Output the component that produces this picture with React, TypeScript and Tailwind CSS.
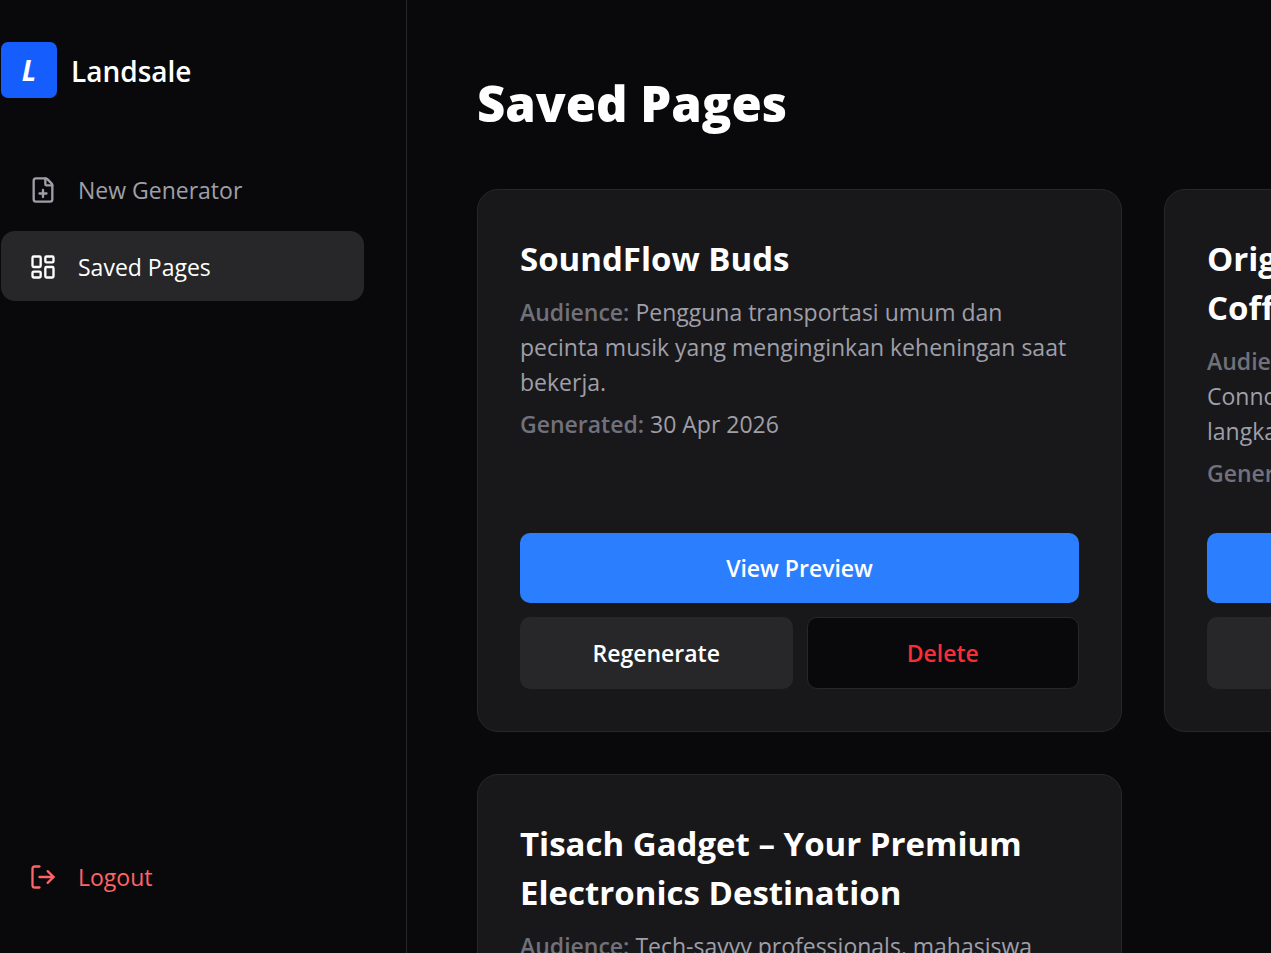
import { FilePlus, LayoutDashboard, LogOut } from "lucide-react";

type Page = {
  title: string;
  audience: string;
  generated: string;
};

const pages: Page[] = [
  {
    title: "SoundFlow Buds",
    audience:
      "Pengguna transportasi umum dan pecinta musik yang menginginkan keheningan saat bekerja.",
    generated: "30 Apr 2026",
  },
  {
    title: "Origin Reserve Premium\nCoffee",
    audience: "Pecinta kopi,\nConnoisseur dan kolektor biji kopi\nlangka.",
    generated: "30 Apr 2026",
  },
  {
    title: "Tisach Gadget – Your Premium Electronics Destination",
    audience: "Tech-savvy professionals, mahasiswa",
    generated: "30 Apr 2026",
  },
];

function Sidebar() {
  const item =
    "flex h-[70px] w-full items-center gap-[21px] rounded-[14px] px-7 pt-0.5 text-left text-[23px]";
  return (
    <aside className="flex w-[407px] shrink-0 flex-col border-r border-[#27272a] py-[42px] pr-[42px] pl-px">
      <div className="mb-14 flex items-center gap-3.5">
        <div className="flex size-14 items-center justify-center rounded-[7px] bg-[#155dfc] text-[28px] font-bold italic">
          L
        </div>
        <span className="pt-0.5 text-[28px] font-semibold">Landsale</span>
      </div>
      <nav className="flex flex-col gap-[7px]">
        <a href="#new" className={`${item} text-[#9f9fa9]`}>
          <FilePlus size={28} />
          New Generator
        </a>
        <a href="#saved" aria-current="page" className={`${item} bg-[#27272a] text-white`}>
          <LayoutDashboard size={28} />
          Saved Pages
        </a>
      </nav>
      <button type="button" className={`${item} mt-auto text-[#ff6467]`}>
        <LogOut size={28} />
        Logout
      </button>
    </aside>
  );
}

function PageCard({ title, audience, generated }: Page) {
  return (
    <article className="flex flex-col rounded-[21px] border border-[#27272a] bg-[#18181b] p-[42px]">
      <div className="mb-[42px] flex-1 whitespace-pre-line">
        <h2 className="pt-0.5 pb-3 text-[33px] leading-[49px] font-bold">{title}</h2>
        <p className="mb-[7px] text-[23px] leading-[35px] text-[#9f9fa9]">
          <span className="font-semibold text-[#71717b]">Audience:</span> {audience}
        </p>
        <p className="text-[23px] leading-[35px] text-[#9f9fa9]">
          <span className="font-semibold text-[#71717b]">Generated:</span> {generated}
        </p>
      </div>
      <div className="grid grid-cols-2 gap-3.5 text-[23px] font-semibold">
        <button type="button" className="col-span-2 h-[70px] rounded-[10px] bg-[#2b7fff]">
          View Preview
        </button>
        <button type="button" className="h-[72px] rounded-[10px] bg-[#27272a]">
          Regenerate
        </button>
        <button
          type="button"
          className="h-[72px] rounded-[10px] border border-[#27272a] bg-[#09090b] text-[#fb2c36]"
        >
          Delete
        </button>
      </div>
    </article>
  );
}

export default function App() {
  return (
    <div className="flex h-screen overflow-hidden bg-[#09090b] font-['Open_Sans','Noto_Sans',sans-serif] text-white">
      <Sidebar />
      <main className="min-w-0 flex-1 overflow-hidden p-[70px]">
        <h1 className="mb-[54px] pt-0.5 text-[49px] leading-[63px] font-extrabold">Saved Pages</h1>
        <div className="grid grid-cols-[repeat(2,645px)] gap-[42px]">
          {pages.map((page) => (
            <PageCard key={page.title} {...page} />
          ))}
        </div>
      </main>
    </div>
  );
}
